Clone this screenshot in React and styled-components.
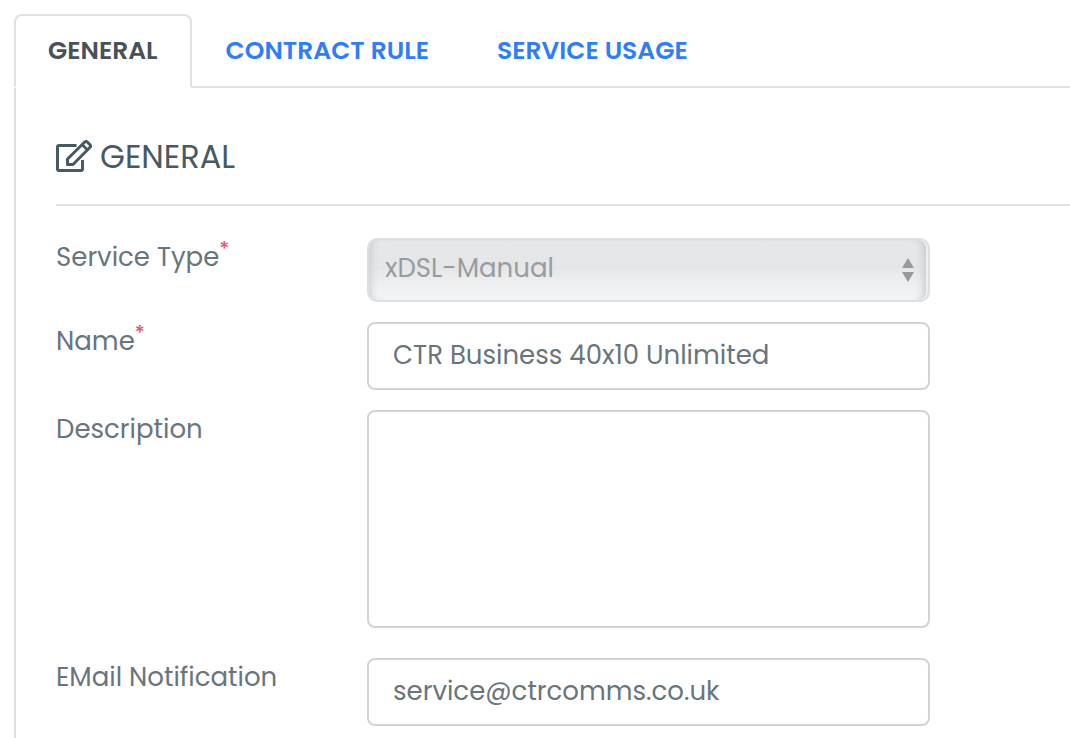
import React from "react";
import styled, { createGlobalStyle } from "styled-components";

const GlobalStyle = createGlobalStyle`
  *, *::before, *::after { box-sizing: border-box; }
  body {
    margin: 0;
    background: #fff;
    color: #69757c;
    font-family: Poppins, Inter, "Liberation Sans", sans-serif;
    font-size: 26px;
    line-height: 38px;
  }
`;

const Page = styled.main`
  min-height: 100vh;
  display: flex;
  flex-direction: column;
  padding: 14px 0 0 14px;
`;

const Tabs = styled.nav`
  display: flex;
  border-bottom: 2px solid #dee2e6;
`;

const Tab = styled.a`
  margin-bottom: -2px;
  padding: 16px 32px;
  border: 2px solid;
  border-color: ${(p) => (p.$active ? "#dee2e6 #dee2e6 #fff" : "transparent")};
  border-radius: 8px 8px 0 0;
  color: ${(p) => (p.$active ? "#495057" : "#2f7df8")};
  font-size: 25px;
  font-weight: 600;
  text-decoration: none;
  white-space: nowrap;
`;

const Panel = styled.section`
  flex: 1;
  padding: 46px 0 12px 40px;
  border-left: 2px solid #dddddd;
`;

const Heading = styled.h2`
  display: flex;
  align-items: center;
  gap: 8px;
  margin: 0 0 32px;
  padding-bottom: 24px;
  border-bottom: 2px solid #e4e4e4;
  color: #475a63;
  font-size: 32px;
  font-weight: 400;
  line-height: 46px;
`;

const Form = styled.form`
  display: flex;
  flex-direction: column;
  gap: 20px;
`;

const Row = styled.div`
  display: grid;
  grid-template-columns: 311fr 563fr 140fr;
  align-items: start;
  padding-bottom: ${(p) => (p.$spaced ? "10px" : "0")};
`;

const Label = styled.label`
  white-space: nowrap;
`;

const Required = styled.sup`
  color: #e8506b;
  font-size: 20px;
  font-weight: 500;
  line-height: 0;
`;

const Input = styled.input`
  width: 100%;
  height: 68px;
  padding: 0 24px 2px;
  border: 2px solid #ced4da;
  border-radius: 8px;
  background: #fff;
  color: inherit;
  font: inherit;
`;

const TextArea = styled.textarea`
  display: block;
  width: 100%;
  height: 218px;
  padding: 12px 24px;
  border: 2px solid #ced4da;
  border-radius: 8px;
  background: #fff;
  color: inherit;
  font: inherit;
  resize: none;
`;

const SelectBox = styled.div`
  position: relative;
`;

const Select = styled.select`
  display: block;
  width: 100%;
  height: 64px;
  padding: 0 40px 4px 16px;
  border: 2px solid #dce0e4;
  border-radius: 10px;
  appearance: none;
  background: linear-gradient(#e6e7e9, #e5e6e8 50%, #e8e9eb 52%, #f5f6f8);
  box-shadow: inset 8px 0 8px -7px #c4c6c8, inset -2px 0 0 0 #eeeff1, inset -11px 0 8px -7px #c4c6c8;
  color: #969da0;
  font: inherit;
  opacity: 1;
`;

const Arrows = styled.svg`
  position: absolute;
  top: 20px;
  right: 16px;
  pointer-events: none;
`;

function EditIcon() {
  return (
    <svg width="36" height="34" viewBox="0 0 36 34" fill="none" stroke="currentColor" strokeWidth="3" strokeLinejoin="round" aria-hidden="true">
      <path d="M20.500 5.500H3Q1.500 5.500 1.500 7V29Q1.500 30.500 3 30.500H25Q26.500 30.500 26.500 29V20" />
      <path d="M11.500 24.500V19L28.500 2.200Q30 .8 31.500 2.200L33.800 4.500Q35.200 6 33.800 7.500L17 24.500Z" strokeWidth="3" />
      <path d="M26 4.500L31.500 10" strokeWidth="2.600" />
    </svg>
  );
}

export default function App() {
  return (
    <>
      <GlobalStyle />
      <Page>
        <Tabs>
          <Tab href="#general" $active aria-current="page">GENERAL</Tab>
          <Tab href="#contract-rule">CONTRACT RULE</Tab>
          <Tab href="#service-usage">SERVICE USAGE</Tab>
        </Tabs>
        <Panel id="general">
          <Heading><EditIcon />GENERAL</Heading>
          <Form>
            <Row>
              <Label htmlFor="service-type">Service Type<Required>*</Required></Label>
              <SelectBox>
                <Select id="service-type" disabled defaultValue="xdsl">
                  <option value="xdsl">xDSL-Manual</option>
                </Select>
                <Arrows width="12" height="24" viewBox="0 0 12 24" fill="#949c9f" aria-hidden="true">
                  <path d="M6 0L12 10H0ZM0 14H12L6 24Z" />
                </Arrows>
              </SelectBox>
            </Row>
            <Row>
              <Label htmlFor="name">Name<Required>*</Required></Label>
              <Input id="name" type="text" defaultValue="CTR Business 40x10 Unlimited" />
            </Row>
            <Row $spaced>
              <Label htmlFor="description">Description</Label>
              <TextArea id="description" />
            </Row>
            <Row>
              <Label htmlFor="email">EMail Notification</Label>
              <Input id="email" type="email" defaultValue="service@ctrcomms.co.uk" />
            </Row>
          </Form>
        </Panel>
      </Page>
    </>
  );
}
